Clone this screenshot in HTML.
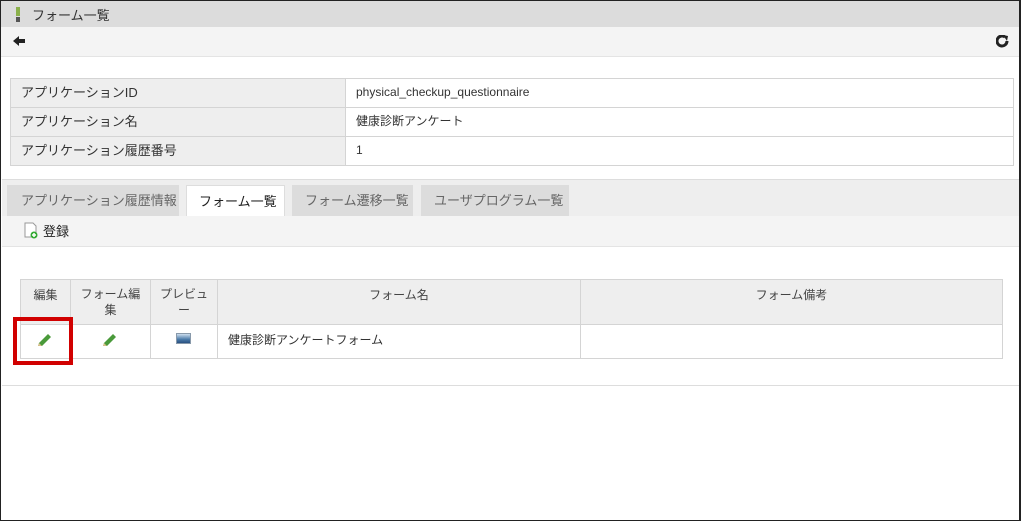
<!DOCTYPE html><html><head><meta charset="utf-8"><style>
*{box-sizing:border-box;margin:0;padding:0}
body{width:1021px;height:521px;background:#fff;font-family:"Liberation Sans","Noto Sans CJK JP",sans-serif;font-size:12px;color:#333;position:relative;overflow:hidden}
.a{position:absolute;white-space:nowrap}
td{border:1px solid #d4d4d4;padding:0 10px}
.i td{padding-bottom:3px}
</style></head><body>
<div class="a" style="left:0;top:0;width:1021px;height:27px;background:#dcdcdc"></div>
<div class="a" style="left:16px;top:7px;width:4px;height:9px;background:#8ab04a"></div>
<div class="a" style="left:16px;top:17px;width:4px;height:5px;background:#555"></div>
<div class="a" style="left:32px;top:5px;font-size:13px;color:#333">フォーム一覧</div>
<div class="a" style="left:0;top:27px;width:1021px;height:30px;background:#f4f4f4;border-bottom:1px solid #e4e4e4"></div>
<svg class="a" style="left:13px;top:35px" width="13" height="12"><path d="M0 6L6 1V4H12V8H6V11Z" fill="#222"/></svg>
<svg class="a" style="left:996px;top:35px" width="13" height="13"><path d="M11 6A5 5 0 1 1 9 2" stroke="#222" stroke-width="3" fill="none"/><path d="M7 0L12 1L11 6Z" fill="#222"/></svg>
<table class="a i" style="left:10px;top:78px;width:1004px;border-collapse:collapse;height:88px">
<tr><td style="width:335px;background:#eee;font-size:13px">アプリケーションID</td><td>physical_checkup_questionnaire</td></tr>
<tr><td style="background:#eee;font-size:13px">アプリケーション名</td><td>健康診断アンケート</td></tr>
<tr><td style="background:#eee;font-size:13px">アプリケーション履歴番号</td><td>1</td></tr></table>
<div class="a" style="left:2px;top:179px;width:1019px;height:37px;background:#eee;border-top:1px solid #ddd"></div>
<div class="a" style="left:7px;top:185px;width:172px;height:31px;background:#dcdcdc;color:#666;padding:5px 14px;font-size:13px">アプリケーション履歴情報</div>
<div class="a" style="left:186px;top:185px;width:99px;height:31px;background:#fff;border:1px solid #ddd;border-bottom:none;color:#222;padding:5px 12px;font-size:13px">フォーム一覧</div>
<div class="a" style="left:292px;top:185px;width:121px;height:31px;background:#dcdcdc;color:#666;padding:5px 13px;font-size:13px">フォーム遷移一覧</div>
<div class="a" style="left:421px;top:185px;width:148px;height:31px;background:#dcdcdc;color:#666;padding:5px 13px;font-size:13px">ユーザプログラム一覧</div>
<div class="a" style="left:2px;top:216px;width:1019px;height:31px;background:#f4f4f4;border-bottom:1px solid #e4e4e4"></div>
<svg class="a" style="left:24px;top:222px" width="14" height="17"><path d="M1 1H9L12 4V15H1Z" fill="#fff" stroke="#999"/><circle cx="10" cy="13" r="3.5" fill="#3a3"/><path d="M10 11V15M8 13H12" stroke="#fff" stroke-width="1.5"/></svg>
<div class="a" style="left:43px;top:221px;color:#222;font-size:13px">登録</div>
<table class="a" style="left:20px;top:279px;width:983px;border-collapse:collapse">
<tr style="height:45px;background:#eee;vertical-align:top;text-align:center;color:#444"><td style="width:50px;padding:6px 0">編集</td><td style="width:80px;padding:6px 0;line-height:16px">フォーム編<br>集</td><td style="width:67px;padding:6px 0;line-height:16px">プレビュ<br>ー</td><td style="width:363px;padding:6px 0">フォーム名</td><td style="padding:6px 0">フォーム備考</td></tr>
<tr style="height:34px;vertical-align:top"><td></td><td></td><td></td><td style="padding-top:6px">健康診断アンケートフォーム</td><td></td></tr></table>
<svg class="a" style="left:36px;top:332px" width="16" height="16"><path d="M2 14L3 11L12 2L15 5L6 14Z" fill="#4a9a3a"/><path d="M2 14L3 11L6 14Z" fill="#d9c08a"/></svg>
<svg class="a" style="left:101px;top:332px" width="16" height="16"><path d="M2 14L3 11L12 2L15 5L6 14Z" fill="#4a9a3a"/><path d="M2 14L3 11L6 14Z" fill="#d9c08a"/></svg>
<div class="a" style="left:176px;top:333px;width:15px;height:11px;border:1px solid #89a;background:linear-gradient(#cde,#4a7aa8 60%,#2a5080)"></div>
<div class="a" style="left:13px;top:317px;width:60px;height:48px;border:4px solid #d10000"></div>
<div class="a" style="left:2px;top:385px;width:1019px;height:1px;background:#ddd"></div>
<div class="a" style="left:0;top:0;width:1021px;height:521px;border:1px solid #222;border-right:2px solid #222;pointer-events:none"></div>
</body></html>
